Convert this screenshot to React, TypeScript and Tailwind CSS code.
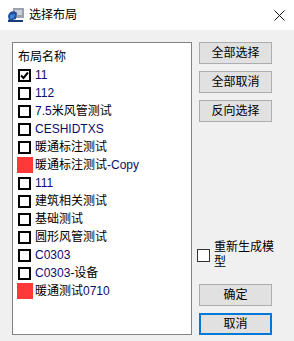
import React from "react";

const font = { fontFamily: '"Liberation Sans", "Noto Sans CJK SC", sans-serif' };

type Item = { parts: [string, boolean][]; mark: "check" | "empty" | "red" };

const items: Item[] = [
  { parts: [["11", true]], mark: "check" },
  { parts: [["112", true]], mark: "empty" },
  { parts: [["7.5", true], ["米风管测试", false]], mark: "empty" },
  { parts: [["CESHIDTXS", true]], mark: "empty" },
  { parts: [["暖通标注测试", false]], mark: "empty" },
  { parts: [["暖通标注测试", false], ["-Copy", true]], mark: "red" },
  { parts: [["111", true]], mark: "empty" },
  { parts: [["建筑相关测试", false]], mark: "empty" },
  { parts: [["基础测试", false]], mark: "empty" },
  { parts: [["圆形风管测试", false]], mark: "empty" },
  { parts: [["C0303", true]], mark: "empty" },
  { parts: [["C0303", true], ["-设备", false]], mark: "empty" },
  { parts: [["暖通测试", false], ["0710", true]], mark: "red" },
];

function Mark({ kind }: { kind: Item["mark"] }) {
  if (kind === "red") {
    return <div className="w-[16px] h-[16px] bg-[#ff3838] ml-[-1px] mr-[-2px]" />;
  }
  return (
    <div className="w-[13px] h-[13px] border-2 border-black bg-white flex items-center justify-center">
      {kind === "check" && (
        <svg width="9" height="9" viewBox="0 0 9 9">
          <path d="M1 4.5 L3.5 7 L8 1.5" fill="none" stroke="#000" strokeWidth="2" />
        </svg>
      )}
    </div>
  );
}

function Btn({ label, active }: { label: string; active?: boolean }) {
  return (
    <div
      className={`w-[73px] h-[22px] flex items-center justify-center text-[12px] text-black bg-[#e1e1e1] ${
        active ? "border-2 border-[#0078d7]" : "border border-[#adadad]"
      }`}
    >
      {label}
    </div>
  );
}

export default function App() {
  return (
    <div className="w-[294px] h-[341px] bg-[#f0f0f0] flex flex-col overflow-hidden" style={font}>
      <div className="h-[30px] bg-white flex items-center pl-[7px] pr-[9px]">
        <svg width="18" height="16" viewBox="0 0 18 16">
          <rect x="6" y="1" width="11" height="10" fill="#9aa3ad" />
          <rect x="8" y="3" width="7" height="5" fill="#c9d0d7" />
          <path d="M1 9 C2 4 7 3 10 6 L9 12 L2 14 Z" fill="#1f4e9c" />
          <path d="M3 8 L8 7 L7 11 L3 12 Z" fill="#3f86d6" />
          <rect x="1" y="13" width="15" height="2" fill="#1a3d7a" />
        </svg>
        <span className="ml-[4px] text-[12px] text-black">选择布局</span>
        <div className="flex-1" />
        <svg width="11" height="11" viewBox="0 0 11 11">
          <path d="M0.5 0.5 L10.5 10.5 M10.5 0.5 L0.5 10.5" stroke="#111" strokeWidth="1" />
        </svg>
      </div>
      <div className="flex flex-1 pt-[12px] pb-[6px] pl-[12px]">
        <div className="w-[180px] bg-white border border-[#828282] pt-[5px] pl-[5px]">
          <div className="h-[18px] flex items-center text-[12px] text-black">布局名称</div>
          {items.map((it, i) => (
            <div key={i} className="h-[18px] flex items-center gap-[4px] text-[12px]">
              <Mark kind={it.mark} />
              <span className="whitespace-nowrap">
                {it.parts.map(([t, latin], j) => (
                  <span key={j} className={latin ? "text-[#0c0c66]" : "text-black"}>
                    {t}
                  </span>
                ))}
              </span>
            </div>
          ))}
        </div>
        <div className="ml-[7px] w-[75px] flex flex-col">
          <div className="flex flex-col gap-[7px]">
            <Btn label="全部选择" />
            <Btn label="全部取消" />
            <Btn label="反向选择" />
          </div>
          <div className="flex-1" />
          <div className="flex items-center gap-[4px] ml-[-2px]">
            <div className="w-[13px] h-[13px] border border-[#333] bg-white shrink-0" />
            <div className="text-[12px] leading-[15px] text-black w-[64px]">重新生成模型</div>
          </div>
          <div className="mt-[14px]">
            <Btn label="确定" />
          </div>
          <div className="mt-[7px]">
            <Btn label="取消" active />
          </div>
        </div>
      </div>
    </div>
  );
}
